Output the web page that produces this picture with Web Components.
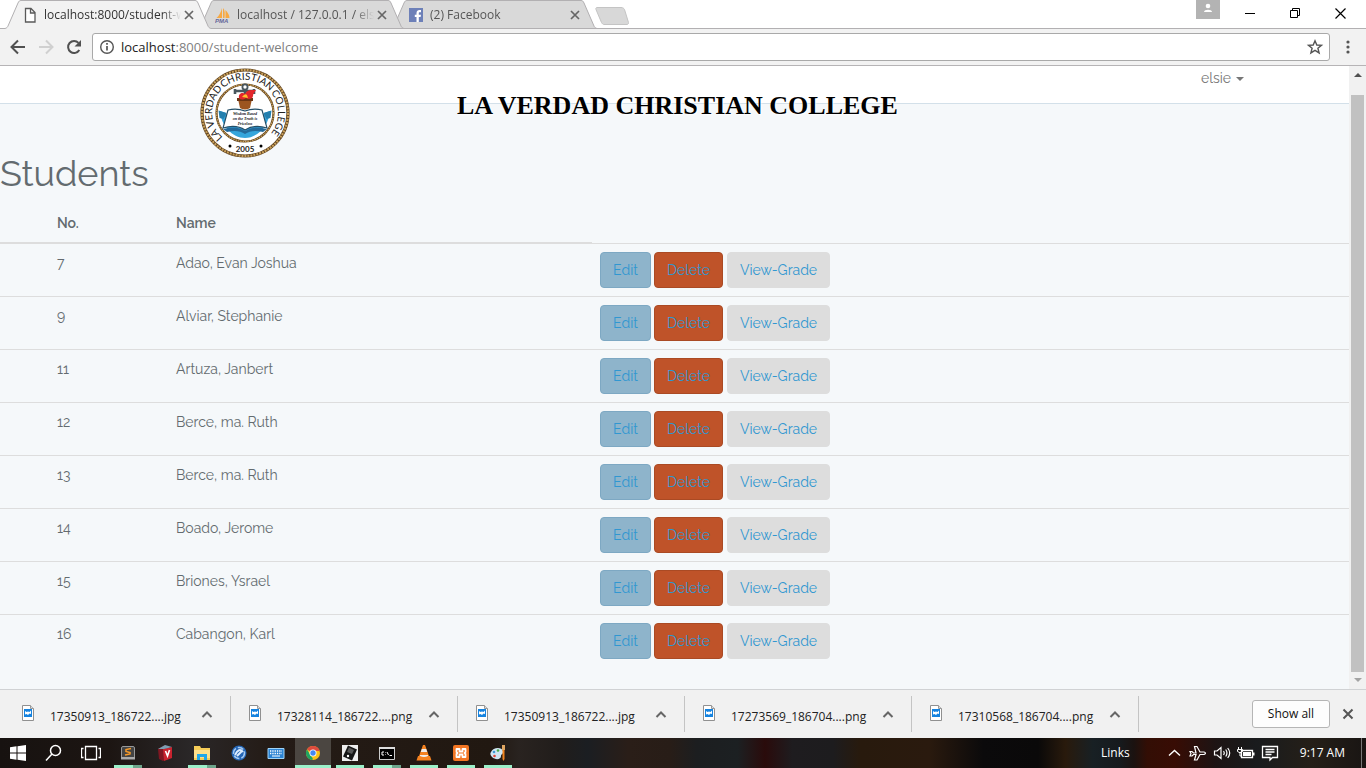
<!DOCTYPE html>
<html lang="en">
<head>
<meta charset="utf-8">
<title>Students - La Verdad Christian College</title>
<style>
html, body { margin: 0; height: 100%; }
body { font-family: "Open Sans", "Noto Sans", sans-serif; font-size: 12px; color: #222; overflow: hidden; }
</style>
</head>
<body>
<browser-window></browser-window>

<template id="tpl-browser-window">
<style>
:host { display: flex; flex-direction: column; height: 100vh; background: #fff; }
.tabs { display: flex; height: 29px; flex: none; padding-left: 5px; box-sizing: border-box; background: linear-gradient(#b2b0b2, #b2b0b2) bottom / 100% 1px no-repeat #fff; }
.new { width: 34px; height: 18px; margin: 7px 0 0 11px; padding: 0; border: 0; background: none; }
.new svg, .controls svg { display: block; }
.controls { display: flex; margin-left: auto; align-items: flex-start; }
.controls button { border: 0; padding: 0; background: none; height: 27px; width: 45px; display: flex; align-items: center; justify-content: center; }
.controls .user { width: 24px; height: 19px; background: #b3b3b3; margin-right: 8px; }
.controls .last { margin-right: 3px; }
student-page { flex: 1; min-height: 0; }
tool-bar, download-shelf, task-bar { flex: none; }
</style>
<div class="tabs">
  <browser-tab active style="z-index:3"><svg slot="icon" width="16" height="16" viewBox="0 0 16 16"><path d="M3.500 1.500h5.500l4 4v9.500h-9.500zM8.500 1.500v4.500h4.500" fill="#fff" stroke="#5a5a5a" stroke-width="1.300"/></svg>localhost:8000/student-w</browser-tab>
  <browser-tab style="z-index:2"><svg slot="icon" width="16" height="16" viewBox="0 0 16 16"><path d="M7 1v10H1.500C4 9 6 5 7 1zM8 1c2 2 2 6 1.500 10H8zM10.500 3c2 2 4 5 4 8h-4z" fill="#f7a944"/><text x="0" y="16" font-size="6" font-weight="bold" font-style="italic" font-family="Liberation Sans" fill="#666699">PMA</text></svg>localhost / 127.0.0.1 / els</browser-tab>
  <browser-tab style="z-index:1"><svg slot="icon" width="16" height="16" viewBox="0 0 16 16"><path fill="#6d80b8" d="M1 1h14v14H1z"/><path fill="#fff" d="M8.500 15V10H6.800V7.700h1.700V6c0-2 1.300-3 3-3H13v2.200h-1.200c-.8 0-1 .4-1 1v1.500H13L12.600 10h-1.800v5z"/></svg>(2) Facebook</browser-tab>
  <button class="new" aria-label="New tab"><svg width="34" height="18" viewBox="0 0 34 18"><path d="M2 .5h24c2 0 3 1 3.500 2l4 13c.3 1-.5 2-1.500 2H9c-1 0-2-1-2.500-2l-5.500-13C.5 1.500 1 .5 2 .5z" fill="#d8d8d8" stroke="#c4c4c4"/></svg></button>
  <div class="controls">
    <button class="user" aria-label="Profile"><svg width="24" height="19" viewBox="0 0 24 19" fill="#fff"><circle cx="12" cy="6" r="2.300"/><path d="M8 12c0-3 8-3 8 0z"/></svg></button>
    <button aria-label="Minimize"><svg width="11" height="11"><path d="M0 5.500h10" stroke="#000"/></svg></button>
    <button aria-label="Restore"><svg width="11" height="11" fill="none" stroke="#000"><path d="M.5 2.500h7v7h-7zM2.500 2.500v-2h7v7h-2"/></svg></button>
    <button class="last" aria-label="Close"><svg width="11" height="11"><path d="M.5.500l10 10M10.500.500l-10 10" stroke="#000" stroke-width="1.200"/></svg></button>
  </div>
</div>
<tool-bar></tool-bar>
<student-page></student-page>
<download-shelf></download-shelf>
<task-bar></task-bar>
</template>

<template id="tpl-browser-tab">
<style>
:host { display: grid; position: relative; width: 206px; height: 29px; margin-right: -13px; color: #555; --fill: #d9d9d9; --line: #b2b0b2; }
:host([active]) { color: #333; --fill: #f2f2f2; --line: #f2f2f2; }
.shape, .row { grid-area: 1 / 1; }
.shape { display: block; width: 100%; height: 29px; }
.row { display: flex; align-items: center; padding: 1px 14px 0 17px; z-index: 1; min-width: 0; }
.text { flex: 1; margin-left: 6px; overflow: hidden; white-space: nowrap; line-height: 18px; -webkit-mask-image: linear-gradient(90deg, #000 86%, transparent); mask-image: linear-gradient(90deg, #000 86%, transparent); }
button { width: 16px; height: 16px; padding: 0; border: 0; background: none; }
svg { display: block; }
</style>
<svg class="shape" viewBox="0 0 206 29" preserveAspectRatio="none"><path d="M0 28.500C2 28 2.500 27 3 26L13 3C14 1 14.500.5 16 .5H190C191.500.5 192 1 193 3L203 26C203.500 27 204 28 206 28.500z" fill="var(--fill)"/><path d="M0 28.500H206" stroke="var(--line)"/><path d="M0 28.500C2 28 2.500 27 3 26L13 3C14 1 14.500.5 16 .5H190C191.500.5 192 1 193 3L203 26C203.500 27 204 28 206 28.500" fill="none" stroke="#b2b0b2"/></svg>
<div class="row"><slot name="icon"></slot><span class="text"><slot></slot></span><button aria-label="Close tab"><svg width="16" height="16"><path d="M4 4l8 8M12 4l-8 8" stroke="#666" stroke-width="1.700"/></svg></button></div>
</template>

<template id="tpl-tool-bar">
<style>
:host { display: flex; align-items: center; height: 37px; box-sizing: border-box; background: #f2f2f2; border-bottom: 1px solid #b6b4b6; padding: 0 8px; }
button { width: 20px; height: 20px; padding: 0; border: 0; background: none; margin-right: 8px; flex: none; }
svg { display: block; }
.box { flex: 1; display: flex; align-items: center; height: 28px; box-sizing: border-box; border: 1px solid #a9a9a9; border-radius: 3px; background: #fff; padding: 0 4px; }
.field { flex: 1; display: grid; align-items: center; }
.field > * { grid-area: 1 / 1; }
input { width: 100%; box-sizing: border-box; border: 0; padding: 0; outline: 0; background: none; font: 13px/20px "Open Sans", sans-serif; color: transparent; }
.url { font-size: 13px; line-height: 20px; color: #808080; pointer-events: none; }
.url b { font-weight: 400; color: #222; }
.box button { margin: 0; }
.info { margin-right: 4px; }
.menu { margin: 0 0 0 8px; }
</style>
<button aria-label="Back"><svg width="20" height="20" fill="none" stroke="#505050" stroke-width="2"><path d="M17 10H4M10 3.500L3.500 10 10 16.500"/></svg></button>
<button aria-label="Forward"><svg width="20" height="20" fill="none" stroke="#d0d0d0" stroke-width="2"><path d="M3 10h13M10 3.500L16.500 10 10 16.500"/></svg></button>
<button aria-label="Reload"><svg width="20" height="20"><path d="M15.300 13A6 6 0 1 1 14.500 5.900" fill="none" stroke="#505050" stroke-width="2"/><path d="M17 3v6.500h-6.500z" fill="#505050"/></svg></button>
<div class="box">
  <svg class="info" width="20" height="20"><circle cx="10" cy="10" r="6.300" fill="none" stroke="#555" stroke-width="1.400"/><path d="M10 9v4.500M10 6v1.700" stroke="#555" stroke-width="1.700"/></svg>
  <div class="field"><div class="url"><b>localhost</b>:8000/student-welcome</div><input aria-label="Address"></div>
  <button aria-label="Bookmark"><svg width="20" height="20"><path d="M10 3.700l1.800 4.300 4.700.3-3.600 3 1.200 4.600L10 13.400l-4.100 2.500 1.200-4.600-3.600-3 4.700-.3z" fill="none" stroke="#555" stroke-width="1.400"/></svg></button>
</div>
<button class="menu" aria-label="Menu"><svg width="20" height="20" fill="#555"><circle cx="10" cy="5" r="1.600"/><circle cx="10" cy="10" r="1.600"/><circle cx="10" cy="15" r="1.600"/></svg></button>
</template>

<template id="tpl-student-page">
<style>
:host { display: flex; background: #f5f8fa; color: #636b6f; font-family: Raleway, Lato, sans-serif; font-size: 14px; overflow: hidden; }
main { flex: 1; position: relative; min-width: 0; }
nav { display: flex; justify-content: flex-end; height: 38px; box-sizing: border-box; background: #fff; border-bottom: 1px solid #d3e0e9; padding-right: 105px; }
nav a { color: #777; text-decoration: none; line-height: 24px; height: 24px; display: flex; align-items: center; gap: 5px; }
nav i { border: 4px solid transparent; border-top-color: #777; border-bottom: 0; margin-top: 2px; }
college-seal { position: absolute; left: 200px; top: 2px; }
.college { position: absolute; left: 457px; top: 24px; margin: 0; font: bold 26px/32px "Liberation Serif", serif; color: #000; text-shadow: 1px 1px 2px #fff; white-space: nowrap; }
h1 { margin: 49px 0 11px; font-size: 36px; line-height: 40px; font-weight: 400; }
.bar { width: 17px; background: #f1f1f1; display: flex; flex-direction: column; align-items: center; }
.bar span { width: 13px; flex: 1; background: #c1c1c1; margin: 12px 0 0; }
.bar svg { display: block; flex: none; }
</style>
<main>
  <nav><a href="#">elsie <i></i></a></nav>
  <college-seal></college-seal>
  <h2 class="college">LA VERDAD CHRISTIAN COLLEGE</h2>
  <h1>Students</h1>
  <student-table></student-table>
</main>
<div class="bar"><svg width="17" height="17"><path d="M5 11h8L9 7z" fill="#505050"/></svg><span></span><svg width="17" height="17"><path d="M5 6h8l-4 4z" fill="#a3a3a3"/></svg></div>
</template>

<template id="tpl-college-seal">
<style>:host { display: block; width: 90px; height: 90px; } svg { display: block; width: 100%; height: 100%; }</style>
<svg viewBox="0 0 90 90" role="img" aria-label="College seal">
<defs>
<path id="left" d="M22.900 69.500A33 33 0 0 1 22.100 21.300"/>
<path id="top" d="M23.300 20.100A33 33 0 0 1 72.400 26.500"/>
<path id="right" d="M71 24.700A33 33 0 0 1 63 72.700"/>
</defs>
<circle cx="45" cy="45" r="43" fill="#fff" stroke="#5e4220" stroke-width="3.200"/>
<circle cx="45" cy="45" r="43" fill="none" stroke="#c9a05a" stroke-width="2.200" stroke-dasharray="2 1"/>
<circle cx="45" cy="45" r="28.500" fill="#fff" stroke="#5e4220" stroke-width="2.200"/>
<circle cx="45" cy="45" r="28.500" fill="none" stroke="#c9a05a" stroke-width="1.400" stroke-dasharray="1.600 .8"/>
<g font-family="Lato" font-size="10" fill="#222">
<text><textPath href="#left">LA VERDAD</textPath></text>
<text><textPath href="#top">CHRISTIAN</textPath></text>
<text><textPath href="#right">COLLEGE</textPath></text>
</g>
<text x="45" y="83.500" text-anchor="middle" font-family="Lato" font-weight="bold" font-size="8" fill="#222">2005</text>
<circle cx="30" cy="78" r="1.500"/><circle cx="61" cy="78" r="1.500"/>
<path d="M20 43l6 2 4 13h30l4-13 6-2c-1 14-12 27-25 27S21 57 20 43z" fill="#35a5dc"/>
<path d="M18.500 42.500l8 2.500-3 6-4-1zM71.500 42.500l-8 2.500 3 6 4-1z" fill="#237fae"/>
<path d="M28 42q9-2 17 1 8-3 17-1l5 18q-13-4-22 2-9-6-22-2z" fill="#fff" stroke="#244f68" stroke-width="1.200"/>
<path d="M23 61q13-4 22 2 9-6 22-2l-4 3q-11-3-18 2-7-5-18-2z" fill="#246a9a"/>
<g font-family="Liberation Serif" font-size="4" font-weight="bold" font-style="italic" fill="#111" text-anchor="middle"><text x="45" y="47">Wisdom Based</text><text x="45" y="52">on the Truth is</text><text x="45" y="57">Priceless</text></g>
<path d="M38 31h14l-2 9q-5 3-10 0z" fill="#9c5520"/><path d="M37 30h16v3H37z" fill="#6b3514"/>
<path d="M45 18v12M35 23h19M35 21v5M54 21v5" stroke="#48565d" stroke-width="2.600"/><circle cx="45" cy="19" r="2.600" fill="#fff" stroke="#48565d" stroke-width="1.800"/>
<path d="M39 30c-1-5 4-6 6-4 2-5 7-4 11-4-1 2-3 3-3 6 0 3-5 4-7 2-3 2-5 2-7 0z" fill="#e3262b"/><path d="M42 29q3-4 5-2l1 3z" fill="#ffc12f"/>
</svg>
</template>

<template id="tpl-student-table">
<style>
:host { display: block; }
table { width: 100%; border-collapse: collapse; table-layout: fixed; line-height: 22px; }
.c1 { width: 168px; } .c2 { width: 424px; }
th, td { padding: 8px; text-align: left; vertical-align: top; }
th:first-child, td:first-child { padding-left: 57px; }
th { font-weight: 600; border-bottom: 2px solid #ddd; }
th:last-child { border-bottom: 0; }
td { border-top: 1px solid #ddd; }
.acts { display: flex; gap: 3px; }
button { height: 36px; font: inherit; line-height: 22px; padding: 0; color: #3097d1; border: 1px solid; border-radius: 4px; }
.edit { width: 51px; background: #8eb4cb; border-color: #7da8c3; }
.del { width: 69px; background: #bf5329; border-color: #aa4a24; }
.view { width: 103px; margin-left: 1px; background: #ddd; border-color: #ddd; }
</style>
<table><colgroup><col class="c1"><col class="c2"><col></colgroup>
<thead><tr><th scope="col">No.</th><th scope="col">Name</th><th></th></tr></thead><tbody></tbody></table>
</template>

<template id="tpl-download-shelf">
<style>
:host { display: flex; align-items: center; box-sizing: border-box; height: 49px; background: #f1f1f1; border-top: 1px solid #d0d2d4; padding: 0 8px 0 4px; }
.all { margin-left: auto; width: 78px; height: 28px; border: 1px solid #b5b5b5; border-radius: 3px; background: #fdfdfd; font: 12px/18px "Open Sans", sans-serif; color: #111; padding: 0; }
.x { width: 20px; height: 20px; margin-left: 8px; padding: 0; border: 0; background: none; }
svg { display: block; }
</style>
<download-item>17350913_186722....jpg</download-item>
<download-item>17328114_186722....png</download-item>
<download-item>17350913_186722....jpg</download-item>
<download-item>17273569_186704....png</download-item>
<download-item>17310568_186704....png</download-item>
<button class="all">Show all</button>
<button class="x" aria-label="Close"><svg width="20" height="20"><path d="M5.500 5.500l9 9M14.500 5.500l-9 9" stroke="#555" stroke-width="2"/></svg></button>
</template>

<template id="tpl-download-item">
<style>
:host { display: flex; align-items: center; box-sizing: border-box; width: 227px; height: 36px; border-right: 1px solid #c4c4c4; padding: 0 16px 0 18px; }
svg { display: block; flex: none; }
.name { flex: 1; margin-left: 16px; padding-top: 5px; line-height: 18px; white-space: nowrap; color: #222; }
button { border: 0; background: none; padding: 0; width: 14px; height: 14px; }
</style>
<svg width="12" height="18"><path d="M.5.500h8l3 3v12h-11z" fill="#fff" stroke="#909090"/><path d="M8.500.500v3h3" fill="#ddd" stroke="#999"/><path d="M2 4h8v8H2z" fill="#1683df"/><path d="M3 6l1.500 1 1.500-.5L7.500 7 9 5.500V9L7.500 8.500 6 10 4.500 9 3 9.500z" fill="#fff"/></svg>
<span class="name"><slot></slot></span>
<button aria-label="File menu"><svg width="14" height="14"><path d="M2.500 10L7 5.500 11.500 10" fill="none" stroke="#666" stroke-width="2"/></svg></button>
</template>

<template id="tpl-task-bar">
<style>
:host { display: flex; align-items: stretch; height: 30px; color: #fff; background: linear-gradient(90deg, #171210 0, #1c1512 8%, #2a2728 14%, #241b16 20%, #211811 36%, #292320 38%, #211d1b 41%, #1b1e22 43%, #2a1e18 46%, #281d17 49%, #1c1e20 51%, #1c2022 54%, #2a0b0b 56%, #1e1c1f 58%, #1d1c1e 61%, #281a0d 63%, #2a1a0e 68%, #0b0a0b 72%, #0a0909 76%, #291a0c 78%, #182024 80%, #161a1d 82%, #1b1210 83%, #330e05 84%, #380c04 86%, #1d1414 89%, #191b1d 92%, #251f18 96%, #191513 100%); }
task-button { flex: none; }
task-button:first-of-type { width: 36px; }
.tray { margin-left: auto; display: flex; align-items: center; }
.links { margin-right: 34px; line-height: 20px; }
.tray svg { display: block; margin-right: 4px; }
.clock { margin: 0 16px; line-height: 20px; }
.peek { width: 4px; align-self: stretch; border-left: 1px solid #777; }
</style>
<task-button label="Start"><svg width="20" height="20"><path fill="#fff" d="M2 4.300l6.500-1v6.200H2zM9.500 3.200L18 2v7.500H9.500zM2 10.500h6.500v6.200l-6.500-1zM9.500 10.500H18V18l-8.500-1.200z"/></svg></task-button>
<task-button label="Search"><svg width="20" height="20" fill="none" stroke="#fff" stroke-width="1.500"><circle cx="11.500" cy="7.500" r="5"/><path d="M8 11l-6 6.500"/></svg></task-button>
<task-button label="Task view"><svg width="20" height="20" fill="none" stroke="#fff" stroke-width="1.300"><path d="M4.500 3.500h11v13h-11zM2.500 5.500h-2v9h2M17.500 5.500h2v9h-2"/></svg></task-button>
<task-button label="Sublime Text" run="split"><svg width="20" height="20"><rect x="3.500" y="3.500" width="13" height="12" rx="1.500" fill="#444" stroke="#999"/><path d="M3 14h14v2.500H3z" fill="#aaa"/><path d="M13 5.500L8 6.500v2l4 1v1.500l-5 1" fill="none" stroke="#f79a28" stroke-width="1.500"/></svg></task-button>
<task-button label="Vocabulary"><svg width="20" height="20"><path d="M3 6l7-4 3 2v11l-5 3-4-2z" fill="#7f1722"/><path d="M8 6l9-2v11l-8 3z" fill="#c9232f"/><path d="M3 6l7-4 7 2-8 2z" fill="#7b9eb2"/><path d="M10.500 8l2 5 2-6" fill="none" stroke="#fff" stroke-width="1.600"/></svg></task-button>
<task-button label="File Explorer" run="split"><svg width="20" height="20"><path d="M2 3h6l1 2h9v12H2z" fill="#f6cd58"/><path d="M2 7h16v8H2z" fill="#ffe08a"/><path d="M5 11h10v6h-3v-3H8v3H5z" fill="#22a7e8"/></svg></task-button>
<task-button label="Tools"><svg width="20" height="20"><circle cx="10" cy="10" r="7.500" fill="#2465b5"/><circle cx="10" cy="10" r="5.500" fill="none" stroke="#a3c9f2" stroke-width="1.500" stroke-dasharray="6 2"/><path d="M6 12q4-8 8-3M8 13l5-5" stroke="#dcecff" stroke-width="2" fill="none"/></svg></task-button>
<task-button label="Keyboard"><svg width="20" height="20"><path d="M2 5.500h16v10H2z" fill="#2b83d3" stroke="#9fd3f7"/><path d="M4 8h12M4 10.500h12" stroke="#fff" stroke-width="1.300" stroke-dasharray="1.300 1"/><path d="M6 13h8" stroke="#fff"/></svg></task-button>
<task-button label="Chrome" run="active"><svg width="20" height="20"><circle cx="10" cy="10" r="7" fill="#fbc116"/><path d="M10 10L4 6.400A7 7 0 0 1 16.700 8H10z" fill="#dd4b3e"/><path d="M4 6.400L10 16l-1 1A7 7 0 0 1 4 6.400z" fill="#1da462"/><circle cx="10" cy="10" r="3.500" fill="#fff"/><circle cx="10" cy="10" r="2.700" fill="#4587f3"/></svg></task-button>
<task-button label="Device" run="on"><svg width="20" height="20"><path d="M2 2h16v16H2z" fill="#eee"/><path d="M8 2.500l9 4-5 11-9-4z" fill="#151515"/><path d="M9 4.500l5 2.500-2 4-5-2z" fill="#555"/><circle cx="8" cy="13" r="1.200" fill="#fff"/></svg></task-button>
<task-button label="Command Prompt" run="split"><svg width="20" height="20"><path d="M2.500 4.500h15v12h-15z" fill="#000" stroke="#ccc"/><path d="M2 4h16v2H2z" fill="#ddd"/><path d="M7 9H5v3h2M8.500 9.500v.5M8.500 11.500v.5M10 9l1.500 3M12.500 12.500H15" stroke="#fff" fill="none"/></svg></task-button>
<task-button label="VLC" run="on"><svg width="20" height="20"><path d="M9 2h2l4 11H5z" fill="#f58220"/><path d="M7.800 6h4.400l1 3H6.800z" fill="#eee"/><path d="M4 13h12l1.500 4.500h-15z" fill="#f58220"/><path d="M6 12h8v1q-4 2-8 0z" fill="#eee"/></svg></task-button>
<task-button label="XAMPP" run="on"><svg width="20" height="20"><rect x="2" y="2" width="16" height="16" rx="2" fill="#f37623"/><path d="M5.500 6h3v2.500h3V6h3v3l-1 1 1 1v3h-3v-2.500h-3V14h-3v-3l1-1-1-1z" fill="none" stroke="#fff" stroke-width="1.800" stroke-linejoin="round"/></svg></task-button>
<task-button label="Paint" run="on"><svg width="20" height="20"><path d="M3 9c2-5 11-5 12-1 1 3-2 3-2 5 0 4-6 4-9 1-2-2-2-4-1-5z" fill="#cfe6f3"/><circle cx="6" cy="9" r="1.300" fill="#3d9bd8"/><circle cx="10" cy="7.500" r="1.300" fill="#47ab4a"/><circle cx="6.500" cy="13" r="1.300" fill="#df4436"/><path d="M14 2h3v5h-3z" fill="#e0a661"/><path d="M14.500 7h2v9l-1 2-1-2z" fill="#f1831e"/></svg></task-button>
<div class="tray">
  <span class="links">Links</span>
  <svg width="20" height="20"><path d="M5 12.500L10.500 7.500 16 12.500" fill="none" stroke="#fff" stroke-width="1.400"/></svg>
  <svg width="20" height="20"><path d="M2 8.500h2l1.500 1.500H8L6.500 3.500H9L12 9h4q3 1 0 2.500h-4L9 17H6.500L8 11.500H5.500L4 13H2l1-2.500z" fill="none" stroke="#fff" stroke-width="1.200"/></svg>
  <svg width="20" height="20" fill="none" stroke="#fff" stroke-width="1.200"><path d="M2.500 8h2.500l4-3.500v11L5 12H2.500zM11.500 8q1.500 2 0 4M13.700 6.500q2.500 3.500 0 7M15.700 5q4 5 0 10"/></svg>
  <svg width="20" height="20"><path d="M5.500 7.500h11v7h-11z" fill="#111" stroke="#fff" stroke-width="1.300"/><path d="M7 9h8v4H7zM17 9.500h1.500v3H17z" fill="#fff"/><path d="M2.500 4v3M5.500 4v3M1.500 6.500h5v2q-2.500 2.500-5 0zM4 9v4h2" fill="none" stroke="#fff"/></svg>
  <svg width="20" height="20"><path d="M2.500 3.500h15v11h-5l-2.500 2.500v-2.500H2.500zM5.500 6.500h9M5.500 9h9M5.500 11.500h6" fill="none" stroke="#fff" stroke-width="1.300"/></svg>
  <span class="clock">9:17 AM</span>
  <span class="peek"></span>
</div>
</template>

<template id="tpl-task-button">
<style>
:host { display: block; width: 37px; height: 30px; }
button { display: flex; align-items: center; justify-content: center; width: 36px; height: 30px; margin: 0; padding: 0; border: 0; background: none; }
:host([run]) button { background: linear-gradient(#9bf0c9, #9bf0c9) 4px 100% / 28px 3px no-repeat; }
:host([run=split]) button { background: linear-gradient(90deg, #9bf0c9 68%, #6da58b 68%) 4px 100% / 28px 3px no-repeat; }
:host([run=active]) button { background: linear-gradient(#9bf0c9, #9bf0c9) 0 100% / 36px 3px no-repeat #4b4641; }
</style>
<button><slot></slot></button>
</template>

<script>
function define(name, setup) {
  customElements.define(name, class extends HTMLElement {
    constructor() {
      super();
      const root = this.attachShadow({ mode: "open" });
      root.append(document.getElementById("tpl-" + name).content.cloneNode(true));
      if (setup) setup.call(this, root);
    }
  });
}

const students = [
  [7, "Adao, Evan Joshua"], [9, "Alviar, Stephanie"], [11, "Artuza, Janbert"], [12, "Berce, ma. Ruth"],
  [13, "Berce, ma. Ruth"], [14, "Boado, Jerome"], [15, "Briones, Ysrael"], [16, "Cabangon, Karl"]
];

define("college-seal");
define("student-table", root => {
  root.querySelector("tbody").innerHTML = students.map(([no, name]) =>
    `<tr><td>${no}</td><td>${name}</td><td><div class="acts"><button class="edit">Edit</button><button class="del">Delete</button><button class="view">View-Grade</button></div></td></tr>`).join("");
});
define("browser-tab");
define("tool-bar", root => {
  const input = root.querySelector("input"), url = root.querySelector(".url");
  input.addEventListener("input", () => { input.style.color = "#222"; url.hidden = true; });
});
define("student-page");
define("download-item");
define("download-shelf");
define("task-button", function (root) {
  root.querySelector("button").setAttribute("aria-label", this.getAttribute("label") || "App");
});
define("task-bar");
define("browser-window");
</script>
</body>
</html>
